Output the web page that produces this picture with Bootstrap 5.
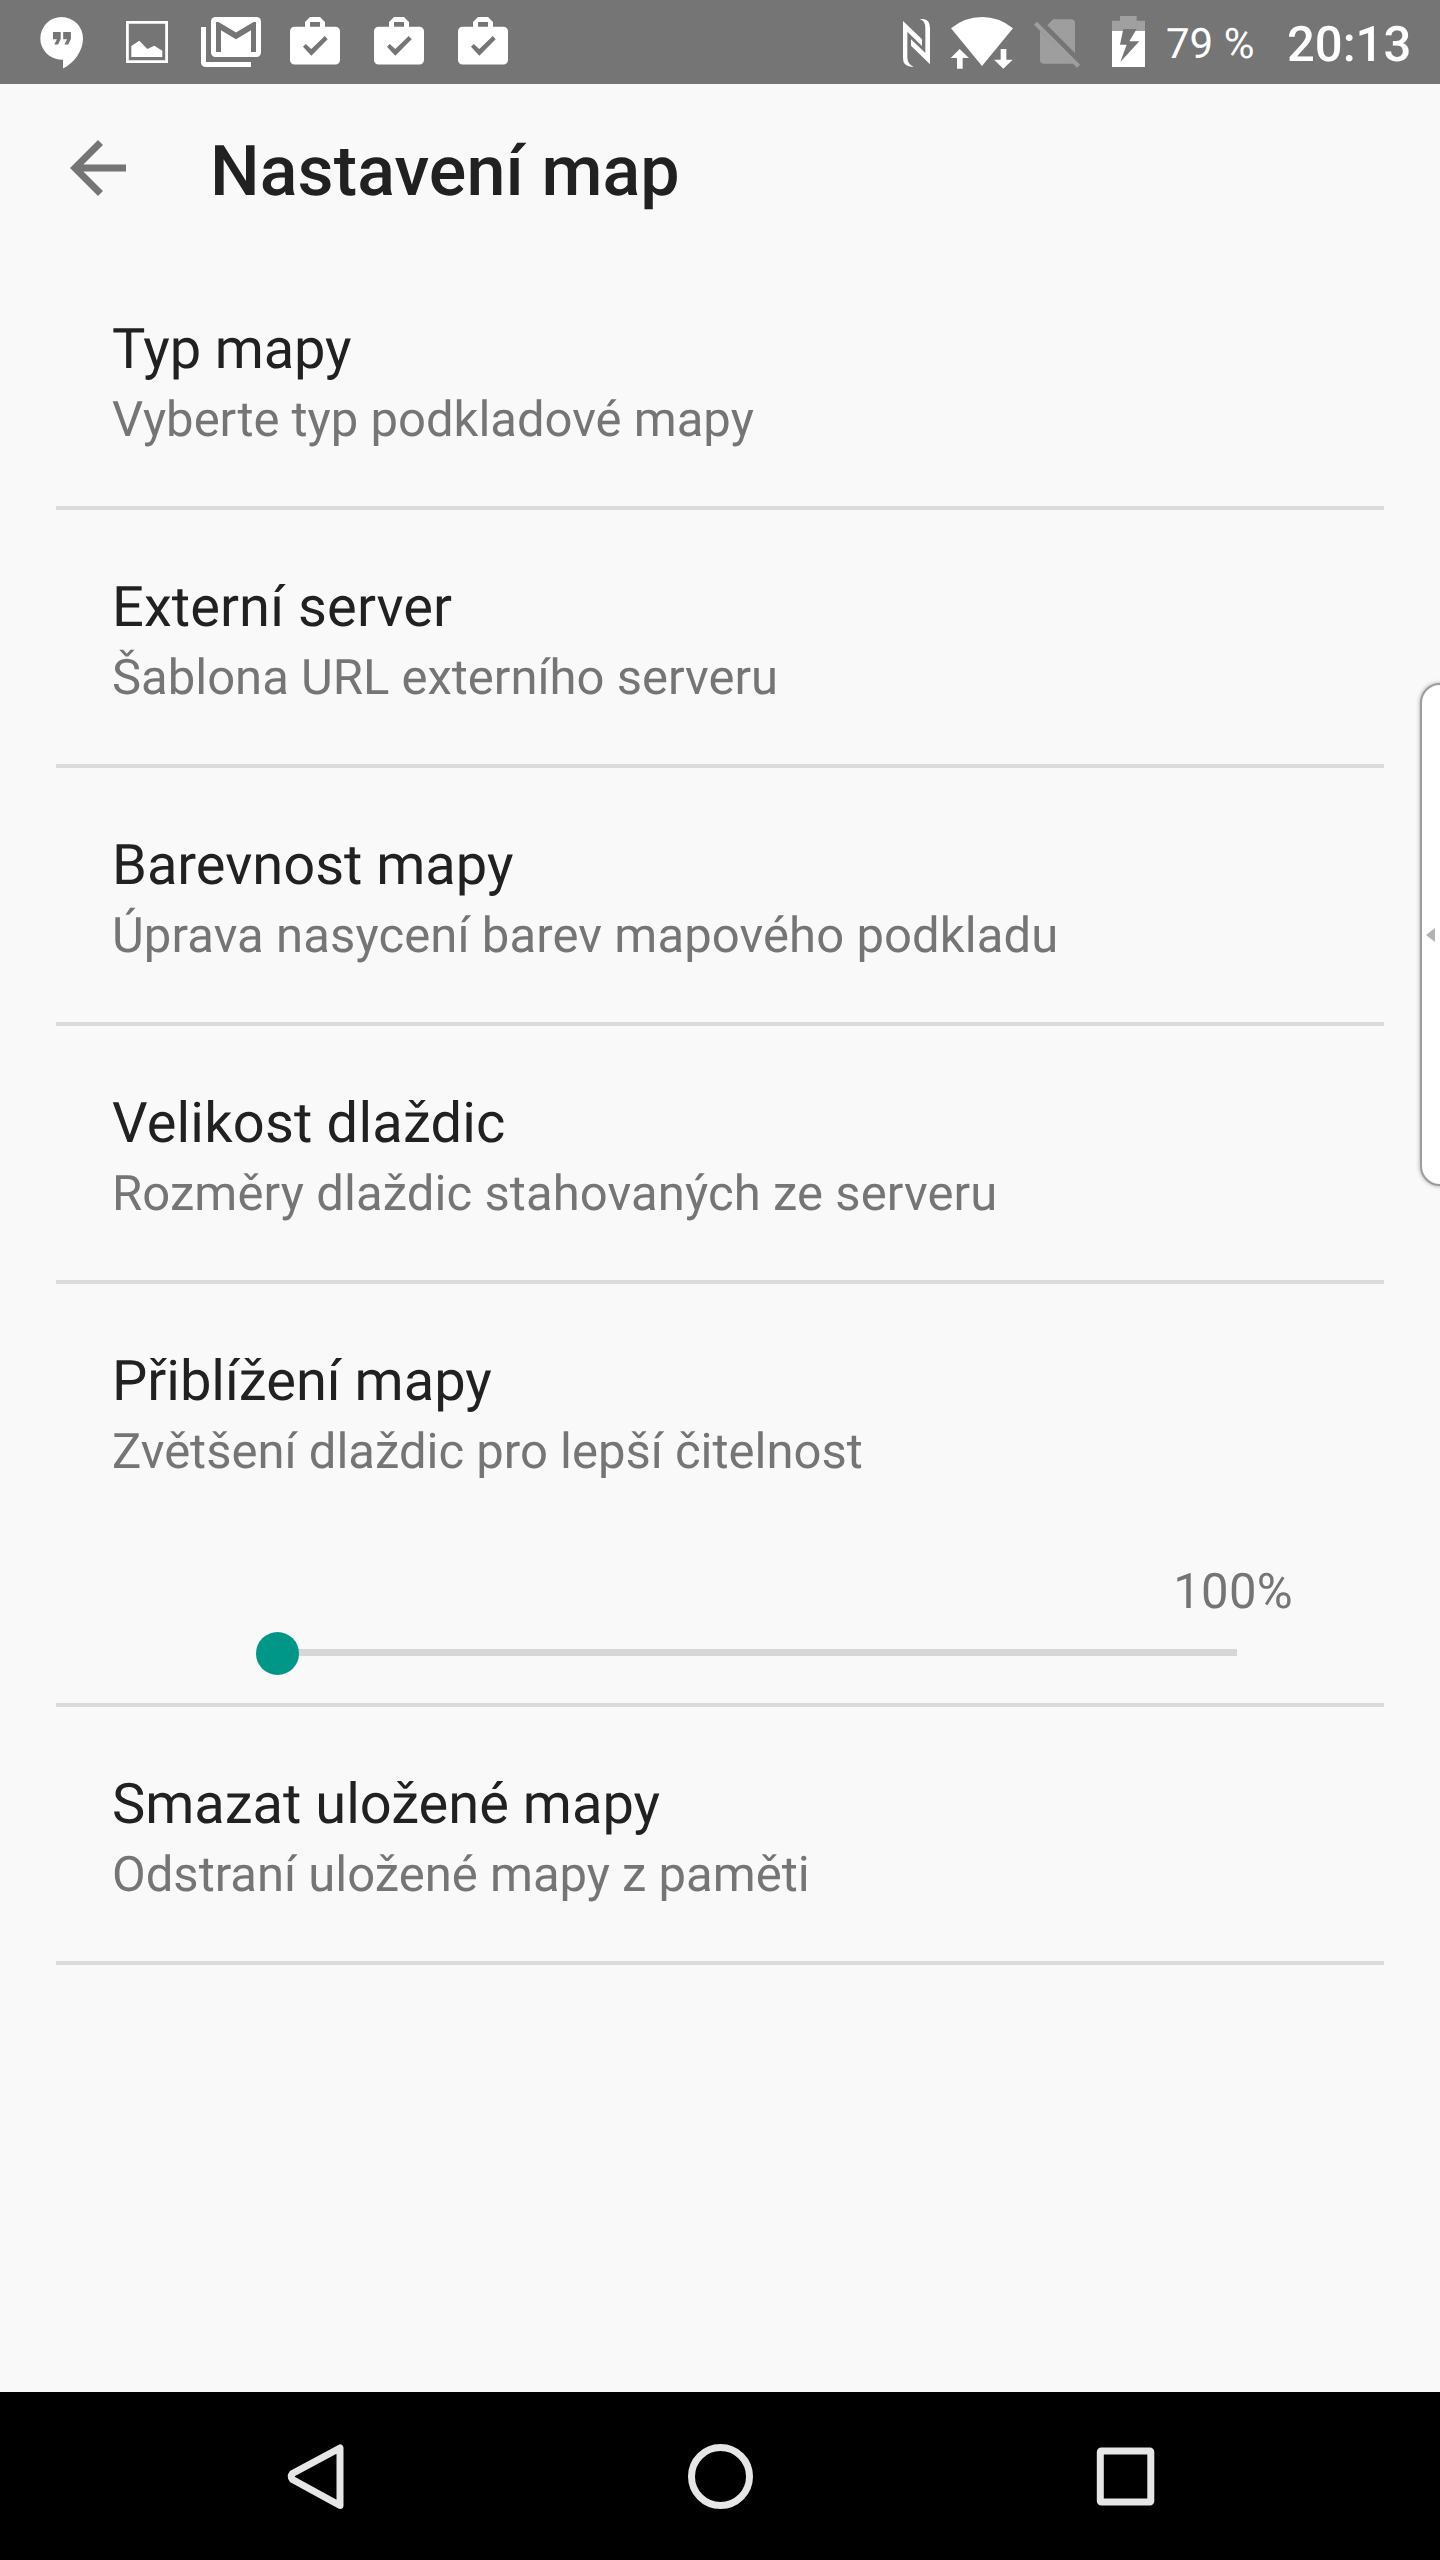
<!DOCTYPE html>
<html lang="cs">
<head>
<meta charset="utf-8">
<meta name="viewport" content="width=device-width, initial-scale=1">
<title>Nastavení map</title>
<link href="https://cdn.jsdelivr.net/npm/bootstrap@5.3.0/dist/css/bootstrap.min.css" rel="stylesheet">
<style>
body{font-family:Roboto,"Noto Sans",sans-serif;background:#f9f9f9;color:#212121;font-kerning:normal;text-rendering:geometricPrecision}
.screen{width:1440px;height:2560px;overflow:hidden}
.status-bar{height:84px;background:#757575;color:#fff;padding-left:20px}
.status-bar svg,.app-bar svg,.nav-keys svg{display:block;flex:none}
.battery-text{font-size:42px;line-height:84px;width:121px;padding:3px 0 0 1px}
.clock{font-size:49px;font-weight:500;line-height:84px;width:154px;padding:3px 0 0 1px}
.app-bar{height:168px;padding-left:56px}
.app-title{font-size:70px;font-weight:500;line-height:84px;margin:8px 0 0 70px;letter-spacing:.1px}
.pref{border-bottom:4px solid #dbdbdb;margin:0 56px;padding:60px 56px 53px;height:258px}
.pref-title{font-size:56px;line-height:74px;margin:0;font-weight:400}
.pref-sub{font-size:49px;line-height:66px;margin:1px 0 0;color:#757575}
.track-tight{letter-spacing:-.15px}
.track-1{letter-spacing:.1px}
.track-2{letter-spacing:.2px}
.pref-zoom{height:423px}
.zoom-value{font-size:49px;line-height:66px;color:#757575;margin:74px 35px 0 0;letter-spacing:.3px}
.zoom-range{width:1002px;height:43px;margin:7px 0 0 144px}
.zoom-range::-webkit-slider-runnable-track{height:43px;border-radius:0;background:linear-gradient(#d7d7d7,#d7d7d7) center 17px/calc(100% - 42px) 7px no-repeat}
.zoom-range::-webkit-slider-thumb{width:43px;height:43px;margin:0;background:#009688;border-radius:50%}
.edge-panel{right:-22px;top:683px;width:42px;height:503px;background:#fff;border:2px solid #9c9c9c;border-radius:20px;box-shadow:0 0 4px rgba(0,0,0,.35)}
.edge-panel svg{display:block;margin-left:4px}
.nav-keys{height:168px;background:#000}
</style>
</head>
<body>
<div class="screen position-relative d-flex flex-column">
  <header class="status-bar d-flex flex-shrink-0">
    <svg width="84" height="84" viewBox="20 0 84 84" fill="#fff"><path d="M61.7 17A21.3 21.3 0 0 0 40.3 38.4 21.3 21.3 0 0 0 61.7 59.7H63V68.5C74 63 83 51 83 38.4A21.3 21.3 0 0 0 61.7 17Z"/><path fill="#757575" d="M53 32h7.7v7l-2.6 5.5h-3.800l2.600-5.300H53zM63.200 32h7.700v7l-2.600 5.500h-3.800l2.600-5.300h-3.900z"/></svg>
    <svg width="84" height="84" viewBox="104 0 84 84"><path fill="none" stroke="#fff" stroke-width="2.8" d="M127.400 22.400h39.200v39.200h-39.200z"/><path fill="#fff" d="M131.300 46l8-5.300 8 8.300 7-3.300 8 5V57h-31z"/></svg>
    <svg width="84" height="84" viewBox="188 0 84 84" fill="#fff"><path d="M201 27h5v35h45v5h-45.500a4.500 4.500 0 0 1-4.500-4.500z"/><rect x="211" y="17" width="50" height="40" rx="4.500"/><path fill="#757575" d="M216 52V22h2.500L236 32.600 253.500 22h2.500v30h-5V30.300l-15 9-15-9V52z"/></svg>
    <svg width="84" height="84" viewBox="272 0 84 84"><g id="briefcase"><path fill="#fff" fill-rule="evenodd" d="M294.500 26.700H305V22l5-5h10l5 5v4.700h10.500a4.500 4.500 0 0 1 4.500 4.500V60a4.500 4.500 0 0 1-4.500 4.500h-41A4.500 4.500 0 0 1 290 60V31.200a4.500 4.500 0 0 1 4.500-4.500zM310 22v4.700h10V22z"/><path fill="#757575" d="M303 46.700l2.700-2.700 5.600 5 13.400-13 3 3.300-16.400 16.400z"/></g></svg>
    <svg width="84" height="84" viewBox="272 0 84 84"><use href="#briefcase"/></svg>
    <svg width="84" height="84" viewBox="272 0 84 84"><use href="#briefcase"/></svg>
    <svg class="ms-auto" width="50" height="84" viewBox="45 0 150 252" fill="#fff"><path d="M69 63L126 118V138L82 95V172Q83 194 101 200H92Q69 198 69 174Z"/><path d="M150 193L93 137V118L136 159V84Q136 62 119 57H129Q150 59 150 84Z"/></svg>
    <svg width="75" height="84" viewBox="195 0 225 252" fill="#fff"><path d="M306 198L213 85Q254 51 306 51T399 85Z"/><path d="M212 174L239 147 267 174H248V206H231V174ZM342 179H362V147H379V179H398L370 206Z"/></svg>
    <svg width="80" height="84" viewBox="420 0 240 252" fill="#9e9e9e"><path d="M502 76L519 58H573Q585 58 585 70V159ZM480 92L582 191H492Q480 191 480 180Z"/><path d="M462 74L471 65 600 194 591 203Z"/></svg>
    <svg width="65" height="84" viewBox="660 0 195 252"><path fill="#a0a0a0" d="M696 62H720V48H770V62H795V93H696Z"/><path fill="#fff" d="M696 93H795V201H696Z"/><path fill="#757575" d="M730 87H770L748 124H778L721 186 740 134H720Z"/></svg>
    <span class="battery-text flex-shrink-0">79 %</span>
    <span class="clock flex-shrink-0">20:13</span>
  </header>

  <div class="app-bar d-flex align-items-center flex-shrink-0">
    <svg width="84" height="84" viewBox="0 0 24 24" fill="#757575"><path d="M20 11H7.830l5.590-5.590L12 4l-8 8 8 8 1.410-1.410L7.830 13H20v-2z"/></svg>
    <h1 class="app-title">Nastavení map</h1>
  </div>

  <main class="flex-grow-1">
    <section class="pref"><h2 class="pref-title track-tight">Typ mapy</h2><p class="pref-sub">Vyberte typ podkladové mapy</p></section>
    <section class="pref"><h2 class="pref-title track-1">Externí server</h2><p class="pref-sub">Šablona URL externího serveru</p></section>
    <section class="pref"><h2 class="pref-title">Barevnost mapy</h2><p class="pref-sub track-1">Úprava nasycení barev mapového podkladu</p></section>
    <section class="pref"><h2 class="pref-title track-2">Velikost dlaždic</h2><p class="pref-sub track-1">Rozměry dlaždic stahovaných ze serveru</p></section>
    <section class="pref pref-zoom">
      <h2 class="pref-title">Přiblížení mapy</h2><p class="pref-sub">Zvětšení dlaždic pro lepší čitelnost</p>
      <div class="zoom-value text-end">100%</div>
      <input type="range" class="form-range zoom-range d-block p-0" min="100" max="500" value="100" aria-label="Přiblížení mapy">
    </section>
    <section class="pref"><h2 class="pref-title">Smazat uložené mapy</h2><p class="pref-sub">Odstraní uložené mapy z paměti</p></section>
  </main>

  <aside class="edge-panel position-absolute d-flex align-items-center"><svg width="9" height="14" viewBox="0 0 9 14"><path fill="#b3b3b3" d="M0 7L9 0V14Z"/></svg></aside>

  <nav class="nav-keys d-flex justify-content-center align-items-center flex-shrink-0">
    <svg width="405" height="168" viewBox="113 2392 405 168" fill="none" stroke="#e6e6e6" stroke-width="7" stroke-linejoin="round"><path d="M340 2448V2505.500L292.500 2479.500Q290 2476.500 292.500 2473.500Z"/></svg>
    <svg width="405" height="168" viewBox="518 2392 405 168" fill="none" stroke="#e6e6e6" stroke-width="7"><circle cx="720.500" cy="2476.500" r="29"/></svg>
    <svg width="405" height="168" viewBox="923 2392 405 168" fill="none" stroke="#e6e6e6" stroke-width="7"><rect x="1100.300" y="2451" width="50.500" height="51" rx="1"/></svg>
  </nav>
</div>
<script src="https://cdn.jsdelivr.net/npm/bootstrap@5.3.0/dist/js/bootstrap.bundle.min.js"></script>
</body>
</html>
